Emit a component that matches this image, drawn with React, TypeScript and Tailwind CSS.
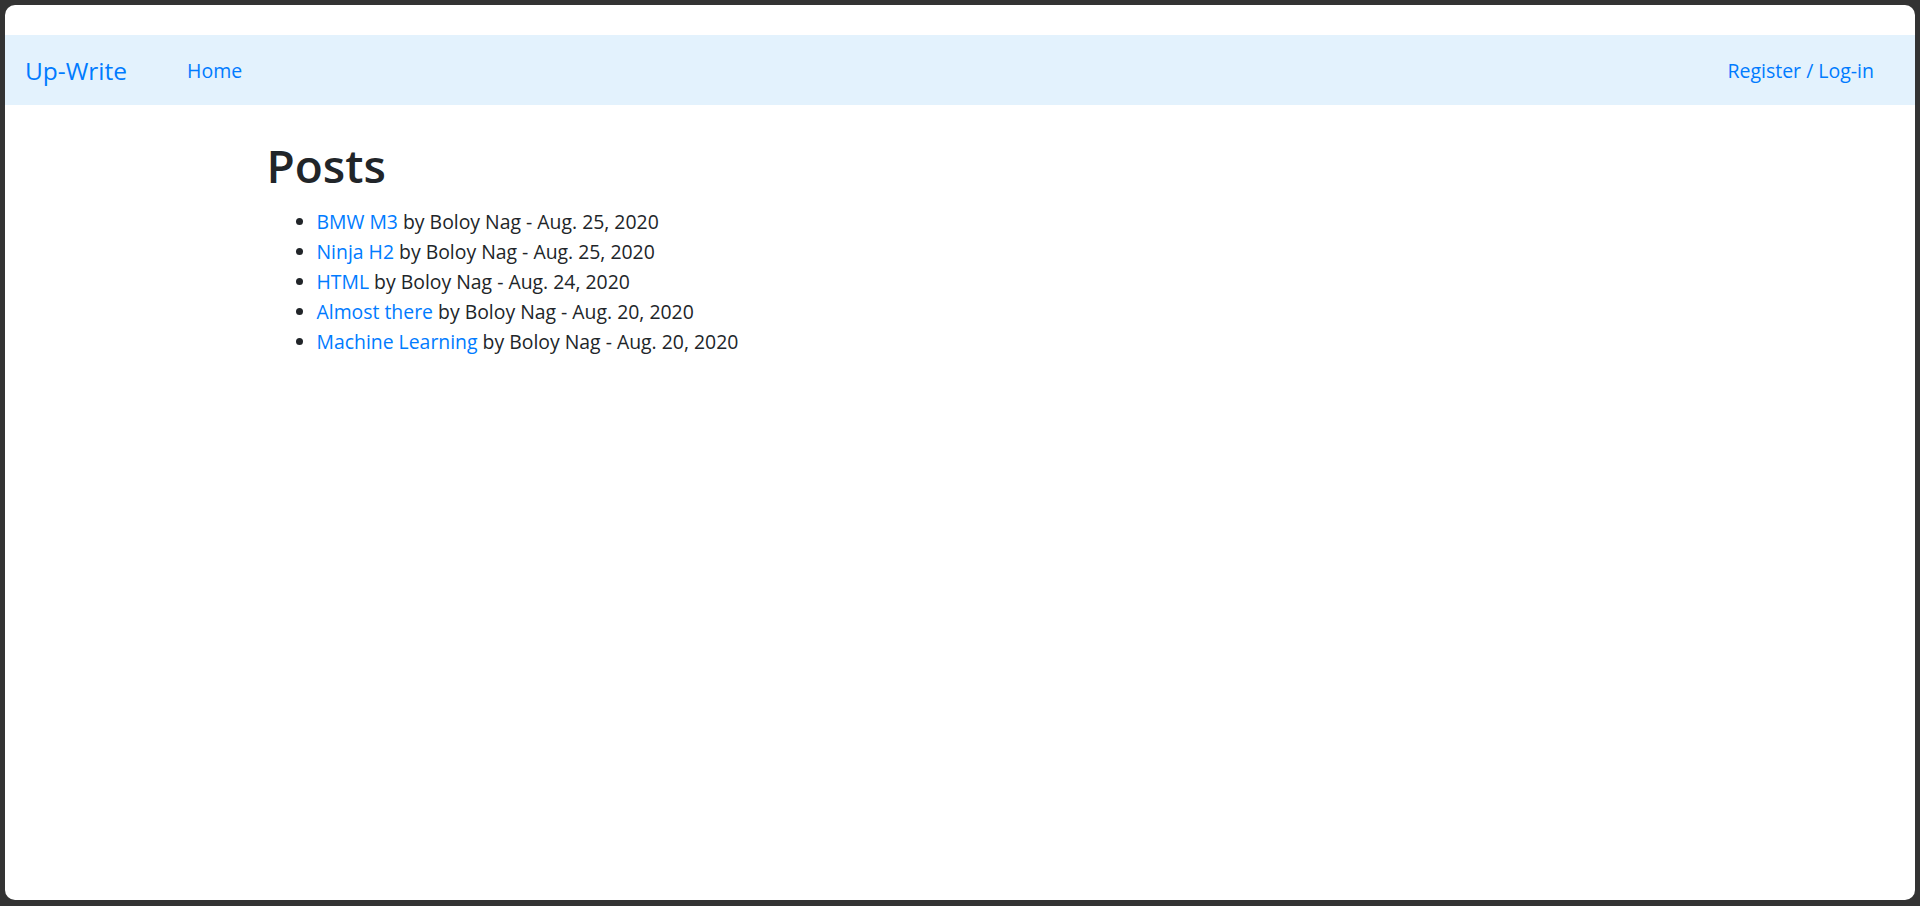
const posts = [
  { title: "BMW M3", date: "Aug. 25, 2020" },
  { title: "Ninja H2", date: "Aug. 25, 2020" },
  { title: "HTML", date: "Aug. 24, 2020" },
  { title: "Almost there", date: "Aug. 20, 2020" },
  { title: "Machine Learning", date: "Aug. 20, 2020" },
];

export default function App() {
  return (
    <div className="h-screen bg-[#333333] pt-[5px] pl-[5px] pr-[5px] pb-[6px] font-['Open_Sans',sans-serif]">
      <div className="h-full bg-white rounded-[10px] pt-[30px] overflow-hidden">
        {/* navbar */}
        <nav className="h-[70px] bg-[#e3f2fd] flex items-center pl-[20px] pr-[41px] pt-[2px]">
          <a href="#" className="text-[24.5px] text-[#007bff] mr-[60px]">
            Up-Write
          </a>
          <a href="#" className="text-[19.5px] text-[#007bff]">
            Home
          </a>
          <a href="#" className="ml-auto text-[19.5px] text-[#007bff]">
            Register / Log-in
          </a>
        </nav>

        {/* posts */}
        <div className="w-[1425px] mx-auto px-[19px]">
          <h1 className="text-[46px] font-semibold leading-[1.2] text-[#212529] mt-[33px] mb-[14px]">
            Posts
          </h1>
          <ul className="list-disc pl-[50px] text-[19.4px] leading-[30px] text-[#212529]">
            {posts.map((p) => (
              <li key={p.title}>
                <a href="#" className="text-[#007bff]">
                  {p.title}
                </a>{" "}
                by Boloy Nag - {p.date}
              </li>
            ))}
          </ul>
        </div>
      </div>
    </div>
  );
}
